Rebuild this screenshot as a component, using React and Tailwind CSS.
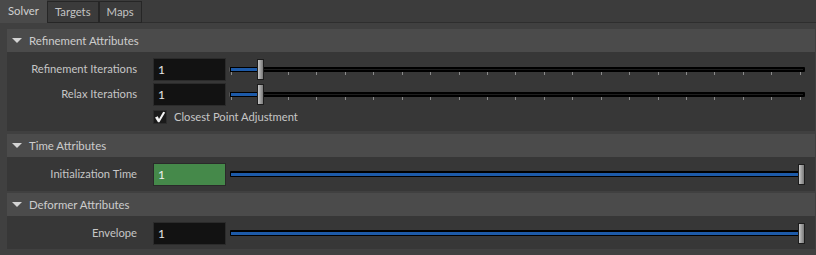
import React from "react";

const font = { fontFamily: "Lato, 'Noto Sans', sans-serif" };

function Tab({ label, active }) {
  return (
    <div
      className={
        active
          ? "h-[23px] px-[8px] flex items-center bg-[#4a4a4a] text-[#d0d0d0] text-[11.3px]"
          : "h-[22px] mt-[1px] px-[7px] flex items-center bg-[#3b3b3b] border border-[#262626] text-[#c4c4c4] text-[11.3px]"
      }
    >
      {label}
    </div>
  );
}

function Header({ title }) {
  return (
    <div className="h-[23px] bg-[#4b4b4b] flex items-center pl-[4px] gap-[7px]">
      <svg width="10" height="6" viewBox="0 0 10 6" className="ml-[1px]">
        <polygon points="0,0 10,0 5,5" fill="#d4d4d4" />
      </svg>
      <span className="text-[11.4px] text-[#cdcdcd]">{title}</span>
    </div>
  );
}

function Handle() {
  return (
    <div className="absolute top-[1px] w-[7px] h-[21px] border border-[#1c1c1c] bg-gradient-to-r from-[#c8c8c8] via-[#a0a0a0] to-[#7a7a7a]" />
  );
}

function IntSlider() {
  return (
    <div className="relative flex-1 h-[23px] ml-[3px] mr-[10px]">
      <div className="pt-[9px] flex flex-col">
        <div className="h-[5px] bg-black rounded-[1px] border-l border-[#555] flex items-center">
          <div className="ml-[1px] w-[27px] h-[3px] bg-[#1d5aa8]" />
          <div className="flex-1 h-[1px] bg-[#1e1e1e] mr-[2px]" />
        </div>
        <div className="flex justify-between pl-[2px] pr-[4px]">
          {Array.from({ length: 21 }).map((_, i) => (
            <div key={i} className="w-[1px] h-[3px] bg-[#8a8a8a]" />
          ))}
        </div>
      </div>
      <div className="absolute left-[28px] top-0 h-full">
        <Handle />
      </div>
    </div>
  );
}

function FloatSlider() {
  return (
    <div className="relative flex-1 h-[23px] ml-[4px] mr-[10px]">
      <div className="pt-[8px]">
        <div className="h-[6px] bg-black rounded-[1px] flex items-center px-[1px] mr-[4px]">
          <div className="flex-1 h-[3px] bg-[#1d5aa8]" />
        </div>
      </div>
      <div className="absolute right-0 top-0 h-full">
        <div className="relative h-full w-[7px]">
          <Handle />
        </div>
      </div>
    </div>
  );
}

function Input({ green }) {
  return (
    <div
      className={
        "w-[73px] h-[23px] border flex items-center pl-[4px] text-[12px] " +
        (green
          ? "bg-[#45894a] border-[#2a2a2a] text-[#f0f0f0]"
          : "bg-[#121212] border-[#2b2b2b] text-[#e6e6e6]")
      }
    >
      1
    </div>
  );
}

function Row({ label, green, float }) {
  return (
    <div className="flex items-center h-[23px]">
      <div className="w-[130px] text-right text-[11.2px] text-[#c6c6c6]">
        {label}
      </div>
      <div className="ml-[16px]">
        <Input green={green} />
      </div>
      {float ? <FloatSlider /> : <IntSlider />}
    </div>
  );
}

export default function App() {
  return (
    <div className="w-[816px] h-[255px] bg-[#404040] overflow-hidden" style={font}>
      <div className="h-[23px] flex bg-[#3c3c3c] border-b border-[#2e2e2e]">
        <Tab label="Solver" active />
        <Tab label="Targets" />
        <Tab label="Maps" />
      </div>
      <div className="pl-[7px] pr-[1px] pt-[6px] flex flex-col">
        <div>
          <Header title="Refinement Attributes" />
          <div className="bg-[#373737] pt-[6px] pb-[7px] flex flex-col gap-[2px]">
            <Row label="Refinement Iterations" />
            <Row label="Relax Iterations" />
            <div className="flex items-center h-[14px] mt-[2px] pl-[146px] gap-[7px]">
              <div className="w-[14px] h-[14px] bg-[#1a1a1a] border border-[#2c2c2c] flex items-center justify-center">
                <svg width="12" height="12" viewBox="0 0 12 12">
                  <path
                    d="M1 6.5 L3.8 5.2 L5 8 L9.2 0.8 L11.2 1.4 L5.4 11.2 L4 11.2 Z"
                    fill="#f2f2f2"
                  />
                </svg>
              </div>
              <span className="text-[11.2px] text-[#c6c6c6]">Closest Point Adjustment</span>
            </div>
          </div>
        </div>
        <div className="mt-[3px]">
          <Header title="Time Attributes" />
          <div className="bg-[#373737] pt-[6px] pb-[5px]">
            <Row label="Initialization Time" green float />
          </div>
        </div>
        <div className="mt-[2px]">
          <Header title="Deformer Attributes" />
          <div className="bg-[#373737] pt-[6px] pb-[4px]">
            <Row label="Envelope" float />
          </div>
        </div>
      </div>
    </div>
  );
}
